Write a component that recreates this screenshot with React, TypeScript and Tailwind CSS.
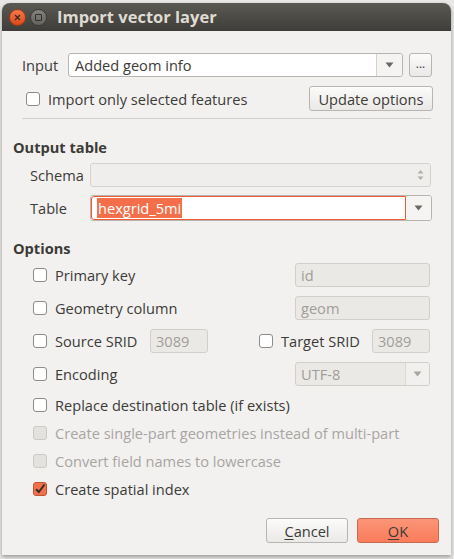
import React from 'react';

const font = { fontFamily: '"Open Sans", "Liberation Sans", Arial, sans-serif' };

const Check = ({ checked = false, disabled = false }: { checked?: boolean; disabled?: boolean }) => {
  if (checked) {
    return (
      <span className="w-[14px] h-[14px] rounded-[3px] border border-[#c4532f] bg-[#f0724c] flex items-center justify-center flex-shrink-0">
        <svg width="12" height="12" viewBox="0 0 12 12">
          <path d="M2 6.2 L4.8 9 L10.5 1.5" fill="none" stroke="#3a2a25" strokeWidth="2" />
        </svg>
      </span>
    );
  }
  return (
    <span
      className={`w-[14px] h-[14px] rounded-[3px] border flex-shrink-0 ${
        disabled ? 'border-[#cdcac6] bg-[#e4e2df]' : 'border-[#8f8b86] bg-white'
      }`}
    />
  );
};

const Arrow = ({ color = '#6b6864' }: { color?: string }) => (
  <svg width="9" height="6" viewBox="0 0 9 6">
    <path d="M0.5 0.5 H8.5 L4.5 5.5 Z" fill={color} />
  </svg>
);

const DisabledField = ({ text, w }: { text: string; w: string }) => (
  <div className={`${w} h-[24px] rounded-[3px] border border-[#d2cfcb] bg-[#ebe9e6] flex items-center px-[5px] text-[#a19d98]`}>
    {text}
  </div>
);

export default function App() {
  return (
    <div className="w-[454px] h-[559px] bg-[#e9e8e6] overflow-hidden text-[14.6px] leading-[18px] text-[#3c3b37]" style={font}>
      <div className="ml-[2px] mt-[3px] w-[449px] h-[552px] flex flex-col shadow-[0_2px_4px_rgba(0,0,0,0.35)] rounded-t-[8px] overflow-hidden">
        {/* Title bar */}
        <div className="h-[28px] bg-gradient-to-b from-[#5a5953] to-[#3e3d39] flex items-center px-[7px] gap-[4px]">
          <span className="w-[17px] h-[17px] rounded-full bg-gradient-to-b from-[#f4784a] to-[#dd4814] border border-[#9e3a18] flex items-center justify-center">
            <svg width="7" height="7" viewBox="0 0 7 7">
              <path d="M1 1 L6 6 M6 1 L1 6" stroke="#3b2a22" strokeWidth="1.4" />
            </svg>
          </span>
          <span className="w-[17px] h-[17px] rounded-full bg-gradient-to-b from-[#85837d] to-[#65635e] border border-[#3b3a36] flex items-center justify-center">
            <span className="w-[7px] h-[7px] border border-[#2f2e2b] rounded-[1px]" />
          </span>
          <span className="ml-[6px] font-bold text-[16.5px] text-[#dfdbd2]">Import vector layer</span>
        </div>

        {/* Body */}
        <div className="flex-1 bg-[#f2f1f0] flex flex-col">
          {/* Input */}
          <div className="mt-[22px] ml-[20px] h-[24px] flex items-center">
            <span className="w-[46px]">Input</span>
            <div className="w-[335px] h-[24px] rounded-[3px] border border-[#b8b4af] bg-white flex items-center">
              <span className="flex-1 pl-[6px]">Added geom info</span>
              <span className="w-[26px] h-full border-l border-[#d4d1cd] bg-[#f5f4f3] rounded-r-[3px] flex items-center justify-center">
                <Arrow />
              </span>
            </div>
            <div className="ml-[6px] w-[23px] h-[24px] rounded-[3px] border border-[#b8b4af] bg-gradient-to-b from-[#fbfbfa] to-[#ebe9e7] flex items-center justify-center text-[12px] pb-[2px]">
              ...
            </div>
          </div>

          <div className="mt-[9px] ml-[24px] h-[25px] flex items-center">
            <Check />
            <span className="ml-[8px] flex-1">Import only selected features</span>
            <div className="mr-[18px] w-[124px] h-[25px] rounded-[3px] border border-[#b8b4af] bg-gradient-to-b from-[#fbfbfa] to-[#ebe9e7] flex items-center justify-center">
              Update options
            </div>
          </div>

          <div className="mt-[7px] ml-[20px] w-[409px] h-px bg-[#d3d0cc]" />

          {/* Output table */}
          <div className="mt-[19px] ml-[11px] h-[18px] font-bold flex items-center">Output table</div>

          <div className="mt-[7px] ml-[28px] h-[24px] flex items-center">
            <span className="w-[60px]">Schema</span>
            <div className="w-[341px] h-[24px] rounded-[3px] border border-[#d6d3cf] bg-[#efeeec] flex items-center justify-end pr-[6px]">
              <svg width="7" height="12" viewBox="0 0 7 12">
                <path d="M0.5 4.5 L3.5 1 L6.5 4.5 Z M0.5 7.5 L3.5 11 L6.5 7.5 Z" fill="#b2aea9" />
              </svg>
            </div>
          </div>

          <div className="mt-[8px] ml-[28px] h-[26px] flex items-center">
            <span className="w-[60px]">Table</span>
            <div className="w-[342px] h-[26px] rounded-[3px] border border-[#b8b4af] bg-white flex items-center overflow-hidden">
              <div className="flex-1 h-full border border-[#ee5b35] rounded-l-[3px] flex items-center pl-[5px]">
                <span className="bg-[#f26f4a] text-white leading-[20px] px-[1px]">hexgrid_5mi</span>
              </div>
              <span className="w-[25px] h-full bg-[#f5f4f3] flex items-center justify-center">
                <Arrow />
              </span>
            </div>
          </div>

          {/* Options */}
          <div className="mt-[18px] ml-[11px] h-[18px] font-bold flex items-center">Options</div>

          <div className="mt-[6px] ml-[31px] mr-[21px] h-[24px] flex items-center">
            <Check />
            <span className="ml-[8px] flex-1">Primary key</span>
            <DisabledField text="id" w="w-[135px]" />
          </div>

          <div className="mt-[9px] ml-[31px] mr-[21px] h-[24px] flex items-center">
            <Check />
            <span className="ml-[8px] flex-1">Geometry column</span>
            <DisabledField text="geom" w="w-[135px]" />
          </div>

          <div className="mt-[9px] ml-[31px] mr-[21px] h-[24px] flex items-center">
            <Check />
            <span className="ml-[8px] w-[95px]">Source SRID</span>
            <DisabledField text="3089" w="w-[58px]" />
            <span className="ml-[51px] flex items-center"><Check /></span>
            <span className="ml-[8px] flex-1">Target SRID</span>
            <DisabledField text="3089" w="w-[58px]" />
          </div>

          <div className="mt-[9px] ml-[31px] mr-[21px] h-[24px] flex items-center">
            <Check />
            <span className="ml-[8px] flex-1">Encoding</span>
            <div className="w-[135px] h-[24px] rounded-[3px] border border-[#d2cfcb] bg-[#ebe9e6] flex items-center text-[#a19d98] overflow-hidden">
              <span className="flex-1 pl-[5px]">UTF-8</span>
              <span className="w-[24px] h-full bg-[#f1f0ee] border-l border-[#dcd9d5] flex items-center justify-center">
                <Arrow color="#aaa6a1" />
              </span>
            </div>
          </div>

          <div className="mt-[7px] ml-[31px] h-[24px] flex items-center">
            <Check />
            <span className="ml-[8px]">Replace destination table (if exists)</span>
          </div>

          <div className="mt-[4px] ml-[31px] h-[24px] flex items-center text-[#a8a5a0]">
            <Check disabled />
            <span className="ml-[8px]">Create single-part geometries instead of multi-part</span>
          </div>

          <div className="mt-[4px] ml-[31px] h-[24px] flex items-center text-[#a8a5a0]">
            <Check disabled />
            <span className="ml-[8px]">Convert field names to lowercase</span>
          </div>

          <div className="mt-[4px] ml-[31px] h-[24px] flex items-center">
            <Check checked />
            <span className="ml-[8px]">Create spatial index</span>
          </div>

          {/* Buttons */}
          <div className="mt-[17px] mr-[12px] h-[25px] flex justify-end gap-[9px]">
            <div className="w-[82px] h-[25px] rounded-[3px] border border-[#b8b4af] bg-gradient-to-b from-[#fbfbfa] to-[#ebe9e7] flex items-center justify-center">
              <span><span className="underline underline-offset-2">C</span>ancel</span>
            </div>
            <div className="w-[82px] h-[25px] rounded-[3px] border border-[#c66a50] bg-gradient-to-b from-[#fb9578] to-[#f97c5b] flex items-center justify-center">
              <span><span className="underline underline-offset-2">O</span>K</span>
            </div>
          </div>
        </div>
      </div>
    </div>
  );
}
